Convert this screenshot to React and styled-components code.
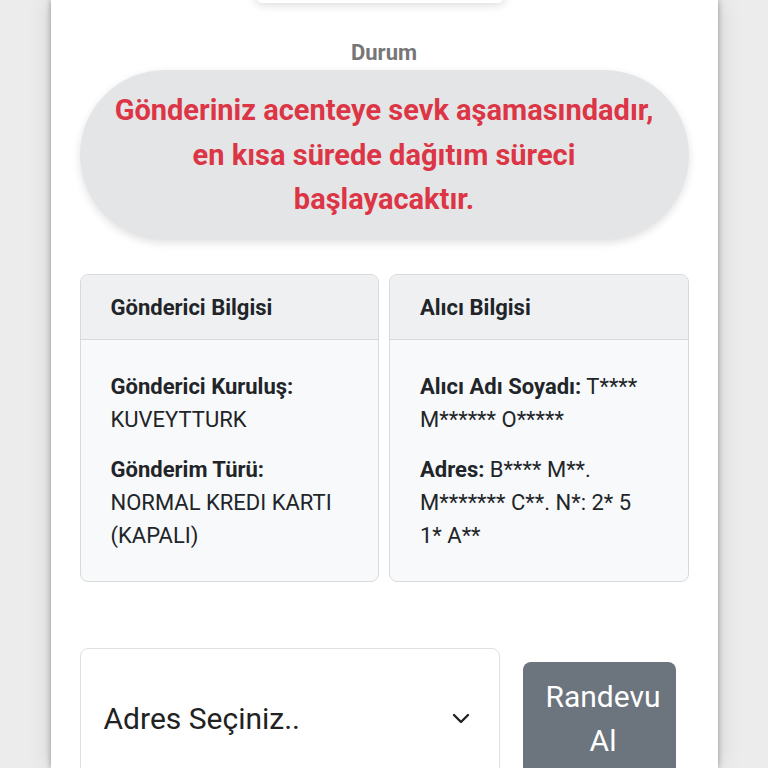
import styled, { createGlobalStyle } from "styled-components";

const GlobalStyle = createGlobalStyle`
  html, body {
    margin: 0;
    padding: 0;
    background: #ececec;
    font-family: Roboto, "Liberation Sans", sans-serif;
  }
`;

export default function App() {
  return (
    <>
      <GlobalStyle />
      <Page>
        <Panel>
          <TopCard />
          <StatusLabel>Durum</StatusLabel>
          <StatusPill>
            Gönderiniz acenteye sevk aşamasındadır,
            <br />
            en kısa sürede dağıtım süreci
            <br />
            başlayacaktır.
          </StatusPill>

          <InfoGrid>
            <InfoCard>
              <CardHeader>Gönderici Bilgisi</CardHeader>
              <CardBody>
                <Field>
                  <b>Gönderici Kuruluş:</b> KUVEYTTURK
                </Field>
                <Field>
                  <b>Gönderim Türü:</b> NORMAL KREDI KARTI (KAPALI)
                </Field>
              </CardBody>
            </InfoCard>
            <InfoCard>
              <CardHeader>Alıcı Bilgisi</CardHeader>
              <CardBody>
                <Field>
                  <b>Alıcı Adı Soyadı:</b> T**** M****** O*****
                </Field>
                <Field>
                  <b>Adres:</b> B**** M**. M******* C**. N*: 2* 5 1* A**
                </Field>
              </CardBody>
            </InfoCard>
          </InfoGrid>

          <ActionRow>
            <SelectBox>
              <span>Adres Seçiniz..</span>
              <svg width="24" height="24" viewBox="0 0 24 24" fill="none" stroke="#222" strokeWidth="2.4" strokeLinecap="round" strokeLinejoin="round">
                <path d="M5 9l7 7 7-7" />
              </svg>
            </SelectBox>
            <AppointmentButton>Randevu Al</AppointmentButton>
          </ActionRow>
        </Panel>
      </Page>
    </>
  );
}

const Page = styled.div`
  height: 768px;
  overflow: hidden;
  display: flex;
  justify-content: center;
`;

const Panel = styled.div`
  width: 667px;
  background: #fff;
  box-shadow: 0 0 6px rgba(0, 0, 0, 0.35), 0 0 24px rgba(0, 0, 0, 0.12);
  padding: 0 29px;
  box-sizing: border-box;
  display: flex;
  flex-direction: column;
  align-items: stretch;

  > * {
    flex-shrink: 0;
  }
`;

const TopCard = styled.div`
  align-self: center;
  width: 250px;
  height: 40px;
  margin-top: -37px;
  margin-left: -8px;
  background: #fff;
  border-radius: 8px;
  box-shadow: 0 2px 10px rgba(0, 0, 0, 0.15);
`;

const StatusLabel = styled.div`
  margin-top: 37px;
  text-align: center;
  font-size: 22px;
  font-weight: 700;
  color: #777;
  line-height: 26px;
`;

const StatusPill = styled.div`
  margin-top: 4px;
  height: 170px;
  box-sizing: border-box;
  padding: 0 20px;
  display: flex;
  align-items: center;
  justify-content: center;
  text-align: center;
  background: #e4e5e7;
  border-radius: 85px;
  box-shadow: 0 3px 8px rgba(0, 0, 0, 0.12);
  color: #dc3545;
  font-size: 29px;
  font-weight: 700;
  line-height: 44.5px;
  white-space: nowrap;
`;

const InfoGrid = styled.div`
  margin-top: 34px;
  display: grid;
  grid-template-columns: 1fr 1fr;
  gap: 10px;
`;

const InfoCard = styled.div`
  border: 1px solid #d9d9d9;
  border-radius: 8px;
  overflow: hidden;
  background: #f8f9fa;
`;

const CardHeader = styled.div`
  height: 65px;
  box-sizing: border-box;
  display: flex;
  align-items: center;
  padding: 0 30px;
  background: #eff0f2;
  border-bottom: 1px solid #d9d9d9;
  font-size: 22px;
  font-weight: 700;
  color: #212529;
`;

const CardBody = styled.div`
  padding: 30px 30px 29px;
  display: flex;
  flex-direction: column;
  gap: 17px;
`;

const Field = styled.div`
  font-size: 22px;
  line-height: 33px;
  color: #212529;

  b {
    font-weight: 700;
  }
`;

const ActionRow = styled.div`
  margin-top: 66px;
  display: flex;
  align-items: flex-start;
  gap: 23px;
`;

const SelectBox = styled.div`
  width: 420px;
  height: 140px;
  box-sizing: border-box;
  border: 1px solid #e0e0e0;
  border-radius: 8px;
  padding: 0 26px 0 23px;
  display: flex;
  align-items: center;
  justify-content: space-between;
  font-size: 30px;
  color: #222;
`;

const AppointmentButton = styled.button`
  margin-top: 14px;
  width: 153px;
  padding: 13px 12px 13px 20px;
  border: none;
  border-radius: 8px;
  background: #6c757d;
  color: #fff;
  font-family: inherit;
  font-size: 30px;
  line-height: 44px;
  text-align: center;
`;
